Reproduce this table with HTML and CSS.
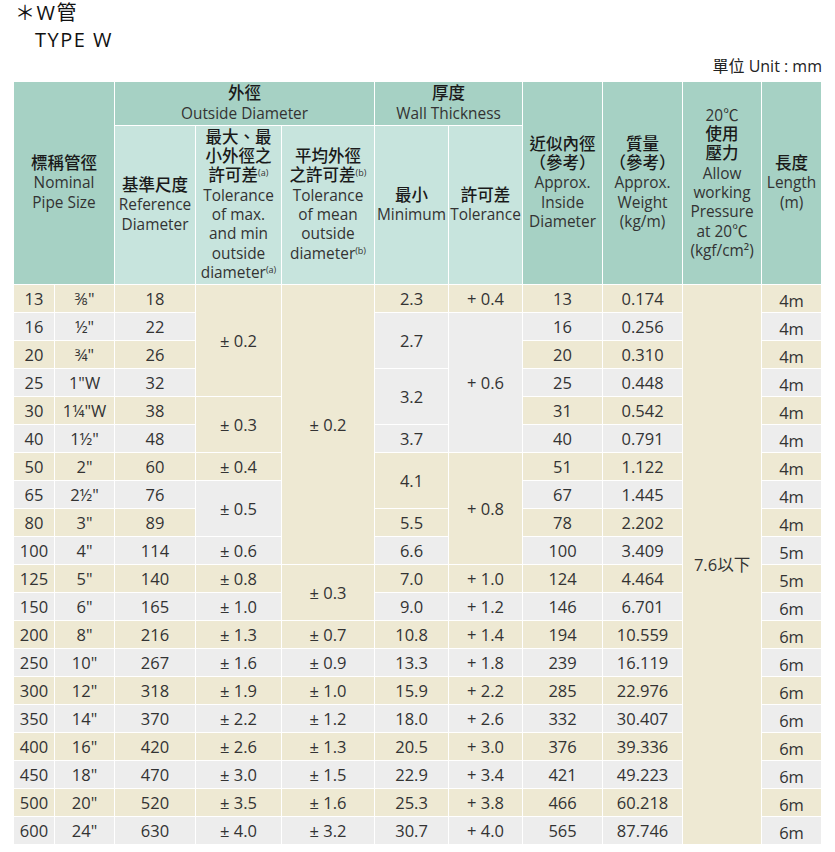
FILE: index.html
```html
<!DOCTYPE html>
<html lang="zh-Hant">
<head>
<meta charset="utf-8">
<title>W管 TYPE W</title>
<link rel="stylesheet" href="styles.css">
</head>
<body>
<div class="page">
  <div class="title">
    <div class="l1">＊W管</div>
    <div class="l2">TYPE W</div>
  </div>
  <div class="unit">單位 Unit : mm</div>
  <table class="spec">
    <colgroup>
      <col class="c1"><col class="c2"><col class="c3"><col class="c4"><col class="c5"><col class="c6"><col class="c7"><col class="c8"><col class="c9"><col class="c10"><col class="c11">
    </colgroup>
    <thead>
      <tr class="h1">
        <th colspan="2" rowspan="2"><span class="zh">標稱管徑</span><br>Nominal<br>Pipe Size</th>
        <th colspan="3"><span class="zh">外徑</span><br>Outside Diameter</th>
        <th colspan="2"><span class="zh">厚度</span><br>Wall Thickness</th>
        <th rowspan="2"><span class="zh">近似內徑<br>（參考）</span><br>Approx.<br>Inside<br>Diameter</th>
        <th rowspan="2"><span class="zh">質量<br>（參考）</span><br>Approx.<br>Weight<br>(kg/m)</th>
        <th rowspan="2">20℃<br><span class="zh">使用<br>壓力</span><br>Allow<br>working<br>Pressure<br>at 20℃<br>(kgf/cm²)</th>
        <th rowspan="2"><span class="zh">長度</span><br>Length<br>(m)</th>
      </tr>
      <tr class="h2">
        <th class="sub"><span class="zh">基準尺度</span><br>Reference<br>Diameter</th>
        <th class="sub"><span class="zh">最大、最<br>小外徑之<br>許可差</span><sup>(a)</sup><br>Tolerance<br>of max.<br>and min<br>outside<br>diameter<sup>(a)</sup></th>
        <th class="sub"><span class="zh">平均外徑<br>之許可差</span><sup>(b)</sup><br>Tolerance<br>of mean<br>outside<br>diameter<sup>(b)</sup></th>
        <th class="sub"><span class="zh">最小</span><br>Minimum</th>
        <th class="sub"><span class="zh">許可差</span><br>Tolerance</th>
      </tr>
    </thead>
    <tbody>
      <tr class="b"><td>13</td><td>⅜"</td><td>18</td><td rowspan="4">± 0.2</td><td rowspan="10">± 0.2</td><td>2.3</td><td>+ 0.4</td><td>13</td><td>0.174</td><td rowspan="20">7.6以下</td><td class="len">4m</td></tr>
      <tr class="g"><td>16</td><td>½"</td><td>22</td><td rowspan="2">2.7</td><td rowspan="5">+ 0.6</td><td>16</td><td>0.256</td><td class="len">4m</td></tr>
      <tr class="b"><td>20</td><td>¾"</td><td>26</td><td>20</td><td>0.310</td><td class="len">4m</td></tr>
      <tr class="g"><td>25</td><td>1"W</td><td>32</td><td rowspan="2">3.2</td><td>25</td><td>0.448</td><td class="len">4m</td></tr>
      <tr class="b"><td>30</td><td>1¼"W</td><td>38</td><td rowspan="2">± 0.3</td><td>31</td><td>0.542</td><td class="len">4m</td></tr>
      <tr class="g"><td>40</td><td>1½"</td><td>48</td><td>3.7</td><td>40</td><td>0.791</td><td class="len">4m</td></tr>
      <tr class="b"><td>50</td><td>2"</td><td>60</td><td>± 0.4</td><td rowspan="2">4.1</td><td rowspan="4">+ 0.8</td><td>51</td><td>1.122</td><td class="len">4m</td></tr>
      <tr class="g"><td>65</td><td>2½"</td><td>76</td><td rowspan="2">± 0.5</td><td>67</td><td>1.445</td><td class="len">4m</td></tr>
      <tr class="b"><td>80</td><td>3"</td><td>89</td><td>5.5</td><td>78</td><td>2.202</td><td class="len">4m</td></tr>
      <tr class="g"><td>100</td><td>4"</td><td>114</td><td>± 0.6</td><td>6.6</td><td>100</td><td>3.409</td><td class="len">5m</td></tr>
      <tr class="b"><td>125</td><td>5"</td><td>140</td><td>± 0.8</td><td rowspan="2">± 0.3</td><td>7.0</td><td>+ 1.0</td><td>124</td><td>4.464</td><td class="len">5m</td></tr>
      <tr class="g"><td>150</td><td>6"</td><td>165</td><td>± 1.0</td><td>9.0</td><td>+ 1.2</td><td>146</td><td>6.701</td><td class="len">6m</td></tr>
      <tr class="b"><td>200</td><td>8"</td><td>216</td><td>± 1.3</td><td>± 0.7</td><td>10.8</td><td>+ 1.4</td><td>194</td><td>10.559</td><td class="len">6m</td></tr>
      <tr class="g"><td>250</td><td>10"</td><td>267</td><td>± 1.6</td><td>± 0.9</td><td>13.3</td><td>+ 1.8</td><td>239</td><td>16.119</td><td class="len">6m</td></tr>
      <tr class="b"><td>300</td><td>12"</td><td>318</td><td>± 1.9</td><td>± 1.0</td><td>15.9</td><td>+ 2.2</td><td>285</td><td>22.976</td><td class="len">6m</td></tr>
      <tr class="g"><td>350</td><td>14"</td><td>370</td><td>± 2.2</td><td>± 1.2</td><td>18.0</td><td>+ 2.6</td><td>332</td><td>30.407</td><td class="len">6m</td></tr>
      <tr class="b"><td>400</td><td>16"</td><td>420</td><td>± 2.6</td><td>± 1.3</td><td>20.5</td><td>+ 3.0</td><td>376</td><td>39.336</td><td class="len">6m</td></tr>
      <tr class="g"><td>450</td><td>18"</td><td>470</td><td>± 3.0</td><td>± 1.5</td><td>22.9</td><td>+ 3.4</td><td>421</td><td>49.223</td><td class="len">6m</td></tr>
      <tr class="b"><td>500</td><td>20"</td><td>520</td><td>± 3.5</td><td>± 1.6</td><td>25.3</td><td>+ 3.8</td><td>466</td><td>60.218</td><td class="len">6m</td></tr>
      <tr class="g"><td>600</td><td>24"</td><td>630</td><td>± 4.0</td><td>± 3.2</td><td>30.7</td><td>+ 4.0</td><td>565</td><td>87.746</td><td class="len">6m</td></tr>
    </tbody>
  </table>
</div>
</body>
</html>
```
FILE: styles.css
```css
html, body {
  margin: 0;
  padding: 0;
  background: #ffffff;
}

body {
  font-family: "Open Sans", "Noto Sans CJK TC", sans-serif;
  color: #222222;
}

.page {
  padding: 0 14px 0 13px;
  width: 808px;
}

.title {
  font-size: 20px;
  line-height: 27px;
  letter-spacing: 1.5px;
  padding-left: 2px;
  color: #111111;
}

.title .l1 {
  margin-top: -1px;
}

.title .l2 {
  padding-left: 20px;
}

.unit {
  text-align: right;
  font-size: 16px;
  line-height: 24px;
  margin-top: 1px;
  margin-right: -1px;
  margin-bottom: 3px;
  color: #222222;
}

.spec {
  border-collapse: collapse;
  table-layout: fixed;
  width: 808px;
}

.c1 { width: 41px; }
.c2 { width: 60px; }
.c3 { width: 81px; }
.c4 { width: 86px; }
.c5 { width: 93px; }
.c6 { width: 74px; }
.c7 { width: 74px; }
.c8 { width: 80px; }
.c9 { width: 80px; }
.c10 { width: 79px; }
.c11 { width: 60px; }

.spec th,
.spec td {
  border: 1px solid #ffffff;
  padding: 0;
  text-align: center;
  vertical-align: middle;
}

.spec th {
  background: #a6d1c4;
  font-weight: normal;
  font-size: 15.4px;
  line-height: 19.3px;
  color: #333333;
}

.spec th.sub {
  background: #c7e4dd;
}

.spec .zh {
  font-family: "Liberation Sans", "Noto Sans CJK TC", sans-serif;
  color: #1a1a1a;
  font-size: 16.5px;
  font-weight: 500;
}

.spec sup {
  font-size: 9px;
  line-height: 0;
  vertical-align: 5px;
}

.h1 { height: 44px; }
.h2 { height: 159px; }

.spec tbody tr { height: 28px; }

.spec td {
  font-size: 16.5px;
  line-height: 20px;
  color: #333333;
}

.spec tr.b td { background: #eee9d3; }
.spec tr.g td { background: #ededed; }

.spec td.len {
  padding-top: 4px;
}
```
